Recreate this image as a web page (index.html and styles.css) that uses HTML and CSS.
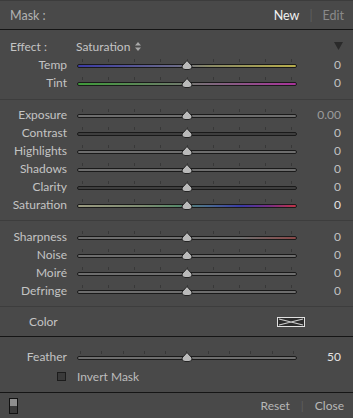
FILE: index.html
```html
<!DOCTYPE html>
<html lang="en">
<head>
    <meta charset="UTF-8">
    <meta name="viewport" content="width=device-width, initial-scale=1.0">
    <title>Mask</title>
    <link rel="stylesheet" href="styles.css">
</head>
<body>
    <div class="panel">
        <!-- cabeçalho -->
        <div class="header">
            <span class="title">Mask :</span>
            <div class="modes">
                <span class="active">New</span>
                <span class="bar">|</span>
                <span class="dim">Edit</span>
            </div>
        </div>

        <!-- efeito + temp/tint -->
        <div class="section top">
            <div class="effect-row">
                <span class="effect-label">Effect :</span>
                <span class="effect-value">Saturation
                    <svg class="updown" width="6" height="9" viewBox="0 0 6 9"><path d="M3 0 L6 3.5 L0 3.5 Z M0 5.5 L6 5.5 L3 9 Z" fill="#a8a8a8"/></svg>
                </span>
                <svg class="collapse" width="9" height="8" viewBox="0 0 9 8"><path d="M0 0 L9 0 L4.5 8 Z" fill="#2a2a2a"/></svg>
            </div>
            <div class="row">
                <span class="label">Temp</span>
                <div class="slider"><div class="ticks"><i></i><i></i><i></i><i></i><i></i><i></i><i></i><i></i><i></i></div><div class="track temp"></div><svg class="thumb" width="12" height="10" viewBox="0 0 12 10"><path d="M6 0.5 L11 6 Q11.5 9.5 8 9.5 L4 9.5 Q0.5 9.5 1 6 Z" fill="#bababa" stroke="#242424"/></svg></div>
                <span class="value">0</span>
            </div>
            <div class="row">
                <span class="label">Tint</span>
                <div class="slider"><div class="ticks"><i></i><i></i><i></i><i></i><i></i><i></i><i></i><i></i><i></i></div><div class="track tint"></div><svg class="thumb" width="12" height="10" viewBox="0 0 12 10"><path d="M6 0.5 L11 6 Q11.5 9.5 8 9.5 L4 9.5 Q0.5 9.5 1 6 Z" fill="#bababa" stroke="#242424"/></svg></div>
                <span class="value">0</span>
            </div>
        </div>

        <!-- tom -->
        <div class="section tone">
            <div class="row">
                <span class="label">Exposure</span>
                <div class="slider"><div class="ticks"><i></i><i></i><i></i><i></i><i></i><i></i><i></i><i></i><i></i></div><div class="track"></div><svg class="thumb" width="12" height="10" viewBox="0 0 12 10"><path d="M6 0.5 L11 6 Q11.5 9.5 8 9.5 L4 9.5 Q0.5 9.5 1 6 Z" fill="#bababa" stroke="#242424"/></svg></div>
                <span class="value dim">0.00</span>
            </div>
            <div class="row">
                <span class="label">Contrast</span>
                <div class="slider"><div class="ticks"><i></i><i></i><i></i><i></i><i></i><i></i><i></i><i></i><i></i></div><div class="track dark"></div><svg class="thumb" width="12" height="10" viewBox="0 0 12 10"><path d="M6 0.5 L11 6 Q11.5 9.5 8 9.5 L4 9.5 Q0.5 9.5 1 6 Z" fill="#bababa" stroke="#242424"/></svg></div>
                <span class="value">0</span>
            </div>
            <div class="row">
                <span class="label">Highlights</span>
                <div class="slider"><div class="ticks"><i></i><i></i><i></i><i></i><i></i><i></i><i></i><i></i><i></i></div><div class="track"></div><svg class="thumb" width="12" height="10" viewBox="0 0 12 10"><path d="M6 0.5 L11 6 Q11.5 9.5 8 9.5 L4 9.5 Q0.5 9.5 1 6 Z" fill="#bababa" stroke="#242424"/></svg></div>
                <span class="value">0</span>
            </div>
            <div class="row">
                <span class="label">Shadows</span>
                <div class="slider"><div class="ticks"><i></i><i></i><i></i><i></i><i></i><i></i><i></i><i></i><i></i></div><div class="track"></div><svg class="thumb" width="12" height="10" viewBox="0 0 12 10"><path d="M6 0.5 L11 6 Q11.5 9.5 8 9.5 L4 9.5 Q0.5 9.5 1 6 Z" fill="#bababa" stroke="#242424"/></svg></div>
                <span class="value">0</span>
            </div>
            <div class="row">
                <span class="label">Clarity</span>
                <div class="slider"><div class="ticks"><i></i><i></i><i></i><i></i><i></i><i></i><i></i><i></i><i></i></div><div class="track dark"></div><svg class="thumb" width="12" height="10" viewBox="0 0 12 10"><path d="M6 0.5 L11 6 Q11.5 9.5 8 9.5 L4 9.5 Q0.5 9.5 1 6 Z" fill="#bababa" stroke="#242424"/></svg></div>
                <span class="value">0</span>
            </div>
            <div class="row">
                <span class="label">Saturation</span>
                <div class="slider"><div class="ticks"><i></i><i></i><i></i><i></i><i></i><i></i><i></i><i></i><i></i></div><div class="track sat"></div><svg class="thumb" width="12" height="10" viewBox="0 0 12 10"><path d="M6 0.5 L11 6 Q11.5 9.5 8 9.5 L4 9.5 Q0.5 9.5 1 6 Z" fill="#bababa" stroke="#242424"/></svg></div>
                <span class="value bright">0</span>
            </div>
        </div>

        <!-- detalhe -->
        <div class="section detail">
            <div class="row">
                <span class="label">Sharpness</span>
                <div class="slider"><div class="ticks"><i></i><i></i><i></i><i></i><i></i><i></i><i></i><i></i><i></i></div><div class="track sharp"></div><svg class="thumb" width="12" height="10" viewBox="0 0 12 10"><path d="M6 0.5 L11 6 Q11.5 9.5 8 9.5 L4 9.5 Q0.5 9.5 1 6 Z" fill="#bababa" stroke="#242424"/></svg></div>
                <span class="value">0</span>
            </div>
            <div class="row">
                <span class="label">Noise</span>
                <div class="slider"><div class="ticks"><i></i><i></i><i></i><i></i><i></i><i></i><i></i><i></i><i></i></div><div class="track"></div><svg class="thumb" width="12" height="10" viewBox="0 0 12 10"><path d="M6 0.5 L11 6 Q11.5 9.5 8 9.5 L4 9.5 Q0.5 9.5 1 6 Z" fill="#bababa" stroke="#242424"/></svg></div>
                <span class="value">0</span>
            </div>
            <div class="row">
                <span class="label">Moiré</span>
                <div class="slider"><div class="ticks"><i></i><i></i><i></i><i></i><i></i><i></i><i></i><i></i><i></i></div><div class="track"></div><svg class="thumb" width="12" height="10" viewBox="0 0 12 10"><path d="M6 0.5 L11 6 Q11.5 9.5 8 9.5 L4 9.5 Q0.5 9.5 1 6 Z" fill="#bababa" stroke="#242424"/></svg></div>
                <span class="value">0</span>
            </div>
            <div class="row">
                <span class="label">Defringe</span>
                <div class="slider"><div class="ticks"><i></i><i></i><i></i><i></i><i></i><i></i><i></i><i></i><i></i></div><div class="track"></div><svg class="thumb" width="12" height="10" viewBox="0 0 12 10"><path d="M6 0.5 L11 6 Q11.5 9.5 8 9.5 L4 9.5 Q0.5 9.5 1 6 Z" fill="#bababa" stroke="#242424"/></svg></div>
                <span class="value">0</span>
            </div>
        </div>

        <!-- cor -->
        <div class="section color">
            <span class="color-label">Color</span>
            <svg class="swatch" width="28" height="10" viewBox="0 0 28 10">
                <rect x="0.5" y="0.5" width="27" height="9" fill="#2c2c2c" stroke="#e0e0e0"/>
                <path d="M2 2 L14 5 L26 2 M2 8 L14 5 L26 8" stroke="#cfcfcf" stroke-width="1.2" fill="none"/>
            </svg>
        </div>

        <!-- feather -->
        <div class="feather">
            <div class="row">
                <span class="label">Feather</span>
                <div class="slider"><div class="ticks wide"><i></i><i></i><i></i><i></i><i></i><i></i><i></i><i></i><i></i><i></i><i></i></div><div class="track"></div><svg class="thumb" width="12" height="10" viewBox="0 0 12 10"><path d="M6 0.5 L11 6 Q11.5 9.5 8 9.5 L4 9.5 Q0.5 9.5 1 6 Z" fill="#bababa" stroke="#242424"/></svg></div>
                <span class="value bright">50</span>
            </div>
            <div class="row invert">
                <span class="check"></span>
                <span class="invert-label">Invert Mask</span>
            </div>
        </div>

        <!-- rodapé -->
        <div class="footer">
            <span class="toggle"></span>
            <div class="actions">
                <span>Reset</span>
                <span class="bar">|</span>
                <span>Close</span>
            </div>
        </div>
    </div>
</body>
</html>
```

FILE: styles.css
```css
body {
    margin: 0;
    padding: 0;
    background-color: #494949;
    font-family: Lato, "Liberation Sans", sans-serif;
    font-size: 12px;
    color: #c4c4c4;
}

.panel {
    width: 353px;
    height: 418px;
    background-color: #494949;
    border-top: 1px solid #3c3c3c;
    box-sizing: border-box;
}

.header {
    height: 28px;
    display: flex;
    justify-content: space-between;
    align-items: center;
    padding: 0 9px 0 10px;
    border-bottom: 1px solid #151515;
    font-size: 12.5px;
}

.title {
    color: #b2b2b2;
}

.modes {
    display: flex;
    gap: 10px;
}

.modes .active {
    color: #f2f2f2;
}

.bar {
    color: #5e5e5e;
}

.modes .dim {
    color: #8a8a8a;
}

.section {
    border-top: 1px solid #3d3d3d;
}

.section.top {
    border-top: none;
    padding: 7px 0 8px;
}

.section.tone {
    padding: 5px 0 7px;
}

.section.detail {
    padding: 6px 0 7px;
}

.effect-row {
    height: 18px;
    display: flex;
    align-items: center;
    padding: 0 10px;
}

.effect-label {
    width: 66px;
}

.effect-value {
    display: flex;
    align-items: center;
    gap: 5px;
}

.collapse {
    margin-left: auto;
}

.row {
    display: grid;
    grid-template-columns: 67px 220px 1fr;
    column-gap: 10px;
    height: 18px;
    align-items: center;
    padding-right: 12px;
}

.label {
    text-align: right;
}

.value {
    text-align: right;
    color: #c2c2c2;
}

.value.dim {
    color: #9c9c9c;
}

.value.bright {
    color: #e4e4e4;
}

.slider {
    position: relative;
    height: 18px;
    display: flex;
    flex-direction: column;
    justify-content: center;
    padding-bottom: 1px;
    box-sizing: border-box;
}

.ticks {
    display: flex;
    justify-content: space-between;
    height: 3px;
    padding: 0 5px;
    margin-bottom: 2px;
}

.ticks.wide {
    padding: 0 3px 0 3px;
}

.ticks i {
    width: 1px;
    height: 3px;
    background-color: #383838;
}

.track {
    height: 4px;
    border-radius: 2px;
    border: 1px solid #1a1a1a;
    box-sizing: border-box;
    background-color: #6e6e6e;
}

.track.dark {
    background-color: #3e3e3e;
}

.track.temp {
    background: linear-gradient(to right, #3c3ca6, #6a6a88 45%, #8a8a66 60%, #b7ad4c);
}

.track.tint {
    background: linear-gradient(to right, #3f9a3a, #6c7c68 45%, #7e6a7c 60%, #a8329b);
}

.track.sat {
    background: linear-gradient(to right, #9a9a80, #7e8c72 30%, #5a8a6a 45%, #4a6a92 60%, #3a3aa6 75%, #7a2e84 88%, #c23446);
}

.track.sharp {
    background: linear-gradient(to right, #6e6e6e 75%, #8a4848);
}

.thumb {
    position: absolute;
    left: 104px;
    top: 5px;
}

.color {
    height: 29px;
    display: flex;
    align-items: center;
    justify-content: space-between;
    padding: 0 48px 0 29px;
}

.feather {
    border-top: 1px solid #151515;
    padding-top: 10px;
    height: 56px;
    box-sizing: border-box;
}

.feather .row {
    height: 18px;
}

.row.invert {
    margin-top: 2px;
}

.check {
    justify-self: end;
    width: 9px;
    height: 9px;
    margin-right: 1px;
    box-sizing: border-box;
    border: 1px solid #1c1c1c;
    background-color: #3a3a3a;
}

.invert-label {
    color: #bcbcbc;
}

.footer {
    border-top: 1px solid #151515;
    height: 24px;
    display: flex;
    align-items: center;
    justify-content: space-between;
    padding: 0 9px;
}

.toggle {
    width: 9px;
    height: 16px;
    box-sizing: border-box;
    border: 1px solid #111;
    background: linear-gradient(to bottom, #8e8e8e 50%, #3a3a3a 50%);
    margin-top: 2px;
}

.actions {
    display: flex;
    gap: 11px;
    color: #b8b8b8;
}
```
